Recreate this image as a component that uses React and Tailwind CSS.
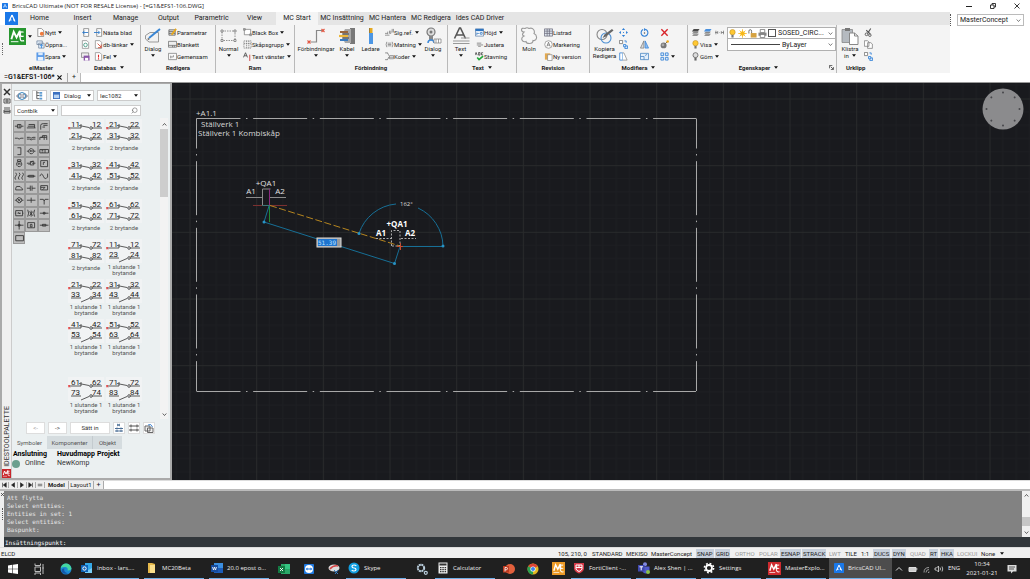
import { Search } from "lucide-react";

const small = {
  newFile: (
    <>
      <path d="M2 .5h4l2.500 2.500v6.500h-6.500z" fill="#fff" stroke="#777" strokeWidth=".8" />
      <circle cx="6.500" cy="6.500" r="2.200" fill="#f07a3c" />
    </>
  ),
  open: (
    <>
      <path d="M1 1h6v4H1zM3 3.500h6V9H3z" fill="#e8f1fb" stroke="#6a7f99" strokeWidth=".8" />
      <path d="M6 9V5M4.500 6.500 6 5l1.500 1.500" fill="none" stroke="#2f86e0" strokeWidth="1" />
    </>
  ),
  save: (
    <>
      <rect x=".5" y=".5" width="9" height="9" fill="#5b9ae8" />
      <rect x="2.500" y=".5" width="5" height="3" fill="#dcebfb" />
      <rect x="2" y="5.500" width="6" height="4" fill="#e9f2fc" />
    </>
  ),
  prev: (
    <>
      <path d="M3 .7h5.500v8.600H3z" fill="#fff" stroke="#777" strokeWidth=".8" />
      <path d="M8 5H2M4 3 2 5l2 2" fill="none" stroke="#2d78c8" />
    </>
  ),
  next: (
    <>
      <path d="M3 .7h5.500v8.600H3z" fill="#fff" stroke="#777" strokeWidth=".8" />
      <path d="M0 5h6M4.500 3l2 2-2 2" fill="none" stroke="#2d78c8" />
    </>
  ),
  refresh: (
    <>
      <path d="M1.500 .7h5l2 2v6.600h-7z" fill="#fff" stroke="#888" strokeWidth=".8" />
      <circle cx="5" cy="5.500" r="2" fill="none" stroke="#4a9a86" />
    </>
  ),
  saveDb: (
    <>
      <path d="M.5 1h8v5h-8z" fill="#eee" stroke="#777" strokeWidth=".8" />
      <rect x="3" y="4" width="6.500" height="5.500" fill="#8a55a8" />
      <rect x="4.500" y="6.500" width="3.500" height="3" fill="#fff" />
    </>
  ),
  dbLink: (
    <>
      <path d="M1.500 .7h5l2 2v6.600h-7z" fill="#fff" stroke="#888" strokeWidth=".8" />
      <path d="m4 4 4 4M8 5v3.500H4.500" fill="none" stroke="#d4503c" />
    </>
  ),
  error: (
    <>
      <path d="M1.500 .7h5l2 2v6.600h-7z" fill="#fff" stroke="#888" strokeWidth=".8" />
      <path d="M5 3v3M5 7v1.200" stroke="#e02020" strokeWidth="1.200" />
    </>
  ),
  params: (
    <>
      <path d="M1 2h7v6H1zM1 4h7M1 6h7" fill="#ddd" stroke="#555" strokeWidth=".8" />
      <path d="M4 7.500 9 1" stroke="#e8a91c" strokeWidth="2" />
    </>
  ),
  form: <path d="M.5 1.500h9v6.500h-9zM.5 6h9M5 6v2M7 6v2" fill="#eee" stroke="#666" strokeWidth=".8" />,
  common: <path d="M.5 1.500h9v7h-9zM3 4v3M3 5.500h3M6 3.500v2" fill="#f8f8f8" stroke="#777" strokeWidth=".8" />,
  blackBox: <path d="M1.500 1.500h7v6h-7zM.5 .5h2v2h-2zM7.500 6.500h2v2h-2z" fill="#fff" stroke="#777" strokeWidth=".8" />,
  cabinet: <path d="M1 1h8v8H1zM4 1v8M6.500 1v8M1 4h8" fill="none" stroke="#777" strokeWidth=".8" strokeDasharray="1.500 .8" />,
  textLeft: (
    <>
      <path d="M.5 6 2.800 .8 5 6M1.400 4.200h2.800" fill="none" stroke="#444" strokeWidth=".9" />
      <path d="M7.500 3v7" stroke="#d04040" />
    </>
  ),
  sigRef: <path d="M0 6h3M3 4v3M5 3v3h1.500V3M8 1v4M9.500 1v4M0 8h5" fill="none" stroke="#777" strokeWidth=".8" />,
  feed: <path d="M2 2Q.5 5 2 8M8 2q1.500 3 0 6M3 3.500h4M3 5h4M3 6.500h4" fill="none" stroke="#777" strokeWidth=".8" />,
  codes: <path d="M0 1h3M0 8.500h3M2 1q2 0 2 3M2 8.500q2 0 2-3M5 4h4.500v3.500H5zM5 5.800h4.500" fill="none" stroke="#777" strokeWidth=".8" />,
  height: (
    <>
      <path d="M.5 1h9v8h-9z" fill="#fff" stroke="#5a7ea8" strokeWidth=".8" />
      <path d="M.5 1h9v2.500h-9z" fill="#2f75c0" />
      <path d="M2 5v3M2 6h3M6 5h2v2H6z" fill="none" stroke="#2f75c0" strokeWidth=".8" />
    </>
  ),
  adjust: <path d="M2 3.500h5M2 5.500h7M3.500 7h3" stroke="#888" strokeWidth="1" />,
  spell: (
    <>
      <path d="M0 3.500 1.200 .5 2.400 3.500M4 .5v3h1.500V.5zM9 .8H7.200v2.400H9" fill="none" stroke="#333" strokeWidth=".8" />
      <path d="m2.500 6 2 2.500L9 4.500" fill="none" stroke="#20a838" strokeWidth="1.800" />
    </>
  ),
  list: <path d="M.5 1h9v8h-9zM.5 3.500h9M.5 6h9M3.500 1v8M6 1v8" fill="#dfe6ee" stroke="#667" strokeWidth=".8" />,
  marking: (
    <>
      <circle cx="5" cy="5" r="4.200" fill="#fff" stroke="#888" strokeWidth=".8" />
      <path d="M3.200 7.200 5 2.500l1.800 4.700M3.800 5.700h2.400" fill="none" stroke="#555" strokeWidth=".7" />
    </>
  ),
  version: (
    <>
      <path d="M1 1.500h6v7H1z" fill="#e3a94e" />
      <path d="M4 3h5v6.500H4z" fill="#fff" stroke="#888" strokeWidth=".8" />
    </>
  ),
  move: <path d="M5 0 6.800 2.200H3.200zM5 10 3.200 7.800h3.600zM0 5l2.200-1.800v3.600zM10 5 7.800 6.800V3.200zM4.500 4.500h1v1h-1z" fill="#2f7fd6" />,
  rotate: (
    <>
      <path d="M6.500 1.800A3.800 3.800 0 1 1 3.500 1.800" fill="none" stroke="#2f7fd6" strokeWidth="1.200" />
      <path d="M4.500 0 7 1.700 4.500 3.500z" fill="#2f7fd6" />
      <circle cx="5" cy="5.500" r=".8" fill="#555" />
    </>
  ),
  remove: <path d="m1.500 1.500 7 7M8.500 1.500l-7 7" stroke="#d8232a" strokeWidth="1.500" />,
  copy: (
    <>
      <path d="M.5 .5H4V4H.5z" fill="#fff" stroke="#666" strokeWidth=".8" />
      <path d="M6 1h2v2M5 5h2.500v2.500H5zM7.500 6.500h2v3h-3v-2" fill="#d7e7f9" stroke="#2f7fd6" strokeWidth=".9" />
    </>
  ),
  mirror: (
    <>
      <path d="M4.300 1v8H.5z" fill="#ddd" stroke="#777" strokeWidth=".8" />
      <path d="M5.700 1v8h3.800z" fill="#8fbdf0" stroke="#2f7fd6" strokeWidth=".8" />
    </>
  ),
  erase: (
    <>
      <circle cx="4" cy="6" r="3.300" fill="#777" />
      <circle cx="3.300" cy="5.500" r="1.500" fill="#aaa" />
      <path d="M6 4 8 2" stroke="#555" />
      <circle cx="8.500" cy="1.700" r="1.400" fill="#f0a818" />
    </>
  ),
  trim: (
    <>
      <path d="M.8 1H4v8H.8z" fill="#fff" stroke="#2f7fd6" strokeWidth=".9" />
      <path d="M4 1h1.500L9 9H4" fill="#fff" stroke="#888" strokeWidth=".8" />
    </>
  ),
  scale: <path d="M.5 1.500h9v7h-9zM.5 5h4v3.500M5.500 4 8 2.500" fill="#e3effb" stroke="#4d88c4" strokeWidth=".9" />,
  array: <path d="M1 1h3v3H1zM6 1h3v3H6zM1 6h3v3H1zM6 6h3v3H6z" fill="#dbe9f9" stroke="#2f7fd6" strokeWidth=".9" />,
  layers: (
    <>
      <path d="M3 6.500h6L7 9H1zM3 4h6L7 6.500H1z" fill="#888" stroke="#fff" strokeWidth=".3" />
      <path d="M3 1.200h6.500L7.500 4H1z" fill="#4a4a4a" />
    </>
  ),
  layersBlue: (
    <>
      <path d="M3 6.500h6L7 9H1zM3 4h6L7 6.500H1z" fill="#888" stroke="#fff" strokeWidth=".3" />
      <path d="M3 1.200h6.500L7.500 4H1z" fill="#4a90dd" />
    </>
  ),
  isolate: <path d="M1 3v4M0 5h3M3 3.500v3M5 5h.5M7 3.500v3M7 5h3M9.500 3v4" stroke="#777" strokeWidth=".9" />,
  bulb: (
    <>
      <circle cx="5" cy="3.500" r="3" fill="#ffc832" stroke="#b88a20" strokeWidth=".6" />
      <path d="M3.800 6.500h2.400V9.500H3.800z" fill="#777" />
    </>
  ),
  bulbOff: (
    <>
      <circle cx="5" cy="3.500" r="2.800" fill="#ddd" stroke="#555" strokeWidth=".8" />
      <path d="M3.800 6.300h2.400V9.500H3.800z" fill="#666" />
    </>
  ),
  sun: (
    <>
      <circle cx="5" cy="5" r="2.600" fill="#ffc41e" />
      <path d="M5 .3v9.400M.3 5h9.400M1.800 1.800l6.400 6.400M8.200 1.800 1.800 8.200" stroke="#f5b51a" strokeWidth=".9" />
    </>
  ),
  lock: (
    <>
      <path d="M1 5V2.500q0-1.800 1.500-1.800T4 2.500V5" fill="none" stroke="#666" />
      <path d="M3 4.500h6.500V9.500H3z" fill="#d5a241" />
    </>
  ),
  print: (
    <>
      <path d="M2.500 .5h5v3.500h-5z" fill="#fff" stroke="#666" strokeWidth=".8" />
      <path d="M.5 4h9v3.500h-9z" fill="#888" />
      <path d="M2.500 6h5v3.500h-5z" fill="#fff" stroke="#666" strokeWidth=".8" />
    </>
  ),
  cut: (
    <>
      <path d="M7.500 .5 4 6M2.500 2.500 7 6.500" stroke="#555" strokeWidth="1.200" />
      <circle cx="2.800" cy="7" r="1.500" fill="none" stroke="#555" />
      <circle cx="6.500" cy="8" r="1.400" fill="none" stroke="#555" />
    </>
  ),
  clipCopy: <path d="M.5 .8h3.500l1.500 1.500V7h-5zM4 3h3.500L9.300 4.500V9.300H4z" fill="#fff" stroke="#777" strokeWidth=".8" />,
};

function Icon({ name, className = "size-[9px]" }) {
  return (
    <svg viewBox="0 0 10 10" className={`${className} shrink-0`} aria-hidden="true">
      {small[name]}
    </svg>
  );
}

function Caret() {
  return (
    <svg viewBox="0 0 4 3" className="h-[3px] w-1 shrink-0" aria-hidden="true">
      <path d="M0 .3h4L2 2.700z" fill="#111" />
    </svg>
  );
}

function Chevron({ className = "" }) {
  return (
    <svg viewBox="0 0 6 6" className={`size-[5px] shrink-0 ${className}`} aria-hidden="true">
      <path d="m.8 1.800 2.200 2.400 2.200-2.400" fill="none" stroke="currentColor" strokeWidth=".9" />
    </svg>
  );
}

function Combo({ label, value, className = "", solid }) {
  return (
    <div className={`relative flex items-center bg-white ${className}`}>
      <select aria-label={label} className="size-full appearance-none bg-transparent pl-[2px] pr-2 outline-none">
        <option>{value}</option>
      </select>
      <span className="pointer-events-none absolute right-[2px] text-[#555]">{solid ? <Caret /> : <Chevron />}</span>
    </div>
  );
}

function BigButton({ icon, label, second, className }) {
  return (
    <button className={`flex shrink-0 flex-col items-center text-[6px] leading-[7px] ${className}`}>
      <svg viewBox="0 0 18 18" className="mt-px size-[18px]" aria-hidden="true">
        {icon}
      </svg>
      <span className="whitespace-nowrap">{label}</span>
      {second ? (
        <span className="flex items-center gap-[3px] whitespace-nowrap">{second}</span>
      ) : (
        <span className="flex h-[7px] items-center">
          <Caret />
        </span>
      )}
    </button>
  );
}

function SmallButton({ icon, label, arrow }) {
  return (
    <button className="flex h-3 items-center text-[6px] whitespace-nowrap" aria-label={label || icon}>
      <Icon name={icon} />
      {label}
      {arrow && (
        <span className="ml-[2px]">
          <Caret />
        </span>
      )}
    </button>
  );
}

function Group({ title, arrow, className, children }) {
  return (
    <section className={`flex shrink-0 flex-col border-[#b9b9b9] pt-px ${className}`}>
      <div className="flex h-9 items-start">{children}</div>
      <h2 className="flex h-[10px] items-center justify-center gap-1 text-[6px] font-bold">
        {title}
        {arrow && <Caret />}
      </h2>
    </section>
  );
}

function McLogo({ className, bg }) {
  return (
    <svg viewBox="0 0 18 18" className={className} aria-hidden="true">
      <path d="M0 0h18v18H0z" fill={bg} />
      <path d="m2.500 12 2.500-8 3 6 3.500-7v7" fill="none" stroke="#fff" strokeWidth="2" />
      <path d="M15.500 4.500q-3.500-1.500-3.500 2t3.500 2M12 10q-1 4.500 4 3.500" fill="none" stroke="#fff" strokeWidth="1.400" />
      <path d="M2 14.500h8" stroke="#fff" strokeWidth="1" />
    </svg>
  );
}

function BricsLogo({ className }) {
  return (
    <svg viewBox="0 0 12 12" className={className} aria-hidden="true">
      <rect width="12" height="12" rx="1" fill="#1a78e8" />
      <path d="M6 2.500 3 9M6 2.500 9 9M3.500 7.500h2M7 7.500h2" fill="none" stroke="#fff" strokeWidth="1.200" />
    </svg>
  );
}

const ribbonTabs = [
  ["Home", "w-[43px]"],
  ["Insert", "w-[43px]"],
  ["Manage", "w-[43px]"],
  ["Output", "w-[43px]"],
  ["Parametric", "w-[43px]"],
  ["View", "w-[43px]"],
  ["MC Start", "w-[42px] bg-[#f4f4f4]"],
  ["MC Insättning", "w-[48px]"],
  ["MC Hantera", "w-[43px]"],
  ["MC Redigera", "w-[44px]"],
  ["Ides CAD Driver", "w-[54px]"],
];

const bigIcons = {
  tag: (
    <>
      <path d="M1.500 8.500 6 5.500h8.500v9.500H5l-3.500-3z" fill="#f2f2f2" stroke="#999" />
      <path d="m5 11 11-9" stroke="#3a86d4" strokeWidth="2" />
      <circle cx="4.500" cy="12" r="1" fill="#777" />
    </>
  ),
  frame: (
    <>
      <path d="M2 4h13v9.500H2z" fill="none" stroke="#888" strokeWidth=".9" strokeDasharray="1.500 1" />
      <path d="M1 3h2v2H1zM14 3h2v2h-2zM1 12.500h2v2H1zM14 12.500h2v2h-2z" fill="#fff" stroke="#666" strokeWidth=".7" />
    </>
  ),
  connection: (
    <>
      <path d="M3.500 15h6V3.500h6" fill="none" stroke="#888" strokeWidth="1.200" />
      <path d="m.5 13.500 3 3M3.500 13.500l-3 3M14.500 2l3 3M17.500 2l-3 3" stroke="#e25540" strokeWidth="1.100" />
    </>
  ),
  cable: (
    <>
      <path d="M12 1h5v16h-5z" fill="#787878" />
      <path d="M7 2h6v14H7l-2-4V6z" fill="#a8a8a8" />
      <path d="M2 5h8" stroke="#9a653a" strokeWidth="2" />
      <path d="M1 9h9" stroke="#edb83a" strokeWidth="2.200" />
      <path d="M2 13h8" stroke="#3a7bc0" strokeWidth="2" />
      <path d="M4 7h7M4 11h7" stroke="#444" />
    </>
  ),
  wire: (
    <>
      <path d="M7.500 1h3v5h-3z" fill="#e5a922" />
      <path d="M7 6h4v11H7z" fill="#4c96e4" />
      <path d="M7.500 1v5" stroke="#916b1a" strokeWidth=".8" />
    </>
  ),
  plug: (
    <>
      <circle cx="7" cy="5" r="4" fill="#ddd" stroke="#777" strokeWidth="1.200" />
      <circle cx="7" cy="5" r="1.500" fill="#777" />
      <path d="M5 9h4v4H5z" fill="#888" />
      <path d="M4 16q0-3 3-3t3 3" fill="none" stroke="#3d8ada" strokeWidth="1.500" />
      <path d="M10 12h7v4h-7zM12 12v4M14.500 12v4" fill="#fff" stroke="#888" strokeWidth=".8" />
    </>
  ),
  text: (
    <>
      <path d="M2.500 11.500 7.500 1h1l5 10.500M4.500 8h7" fill="none" stroke="#555" strokeWidth="1.600" />
      <path d="M9 11h8.500M1 14h16.500M1 16.500h16.500" stroke="#999" />
    </>
  ),
  cloud: (
    <path
      d="M4 5Q1.500 5 1.500 2.800T5 1.500Q7 0 9 1.500q3-1 4.500 1T14 6.500q3 1.500 2.500 4.500t-3.500 2.500q0 3-3.500 3T6 14.500Q3 15.500 2 13t2-4Q1 8 4 5Z"
      fill="#f7f7f7"
      stroke="#999"
      strokeWidth="1.100"
    />
  ),
  edit: (
    <>
      <circle cx="6" cy="7.500" r="5" fill="none" stroke="#888" strokeWidth="1.100" />
      <circle cx="10" cy="11" r="5" fill="none" stroke="#4c8fd2" strokeWidth="1.100" />
      <path d="m6.500 11 2-3.500L16 2l1.500 1.500L10 9.500z" fill="#666" />
    </>
  ),
  paste: (
    <>
      <path d="M1 2.500h10.500v13H1z" fill="#b5bac0" stroke="#888" strokeWidth=".8" />
      <path d="M4 1h5v3H4z" fill="#777" />
      <path d="M8.500 6h5L17 9v8.500H8.500z" fill="#fff" stroke="#888" />
      <path d="M13.500 6v3H17" fill="none" stroke="#888" />
    </>
  ),
};

function Ribbon() {
  return (
    <div className="flex">
      <div className="min-w-0 flex-1">
        <nav className="flex h-[13px] bg-[#e5e5e5] text-[7px]">
          <span className="w-[5px] shrink-0 bg-white" />
          <button aria-label="Application menu" className="flex w-[13px] shrink-0 justify-center bg-[#1a78e8]">
            <BricsLogo className="h-[13px] w-3" />
          </button>
          {ribbonTabs.map(([name, cls]) => (
            <button key={name} className={`shrink-0 text-center whitespace-nowrap ${cls}`}>
              {name}
            </button>
          ))}
        </nav>

        <div className="flex h-12 overflow-hidden bg-[#f4f4f4]">
          <div className="flex w-[5px] shrink-0 items-center justify-center">
            <span className="h-3 border-l border-dotted border-[#666]" />
          </div>
          <Group title="elMaster" className="w-[73px] border-r">
            <button className="ml-1 mt-[2px] flex items-center gap-[2px]" aria-label="elMaster">
              <McLogo bg="#27962f" className="size-[17px]" />
              <Caret />
            </button>
            <div className="ml-1">
              <SmallButton icon="newFile" label="Nytt" arrow />
              <SmallButton icon="open" label="Öppna..." />
              <SmallButton icon="save" label="Spara" arrow />
            </div>
          </Group>
          <Group title="Databas" arrow className="w-[63px] border-r">
            <div className="ml-[3px] w-[13px]">
              <SmallButton icon="prev" />
              <SmallButton icon="refresh" />
              <SmallButton icon="saveDb" />
            </div>
            <div>
              <SmallButton icon="next" label="Nästa blad" />
              <SmallButton icon="dbLink" label="db-länkar" arrow />
              <SmallButton icon="error" label="Fel" arrow />
            </div>
          </Group>
          <Group title="Redigera" className="w-[75px] border-r">
            <BigButton icon={bigIcons.tag} label="Dialog" className="w-6" />
            <div className="ml-[3px]">
              <SmallButton icon="params" label="Parametrar" />
              <SmallButton icon="form" label="Blankett" />
              <SmallButton icon="common" label="Gemensam" />
            </div>
          </Group>
          <Group title="Ram" className="w-[79px] border-r">
            <BigButton icon={bigIcons.frame} label="Normal" className="w-[25px]" />
            <div className="ml-[2px]">
              <SmallButton icon="blackBox" label="Black Box" arrow />
              <SmallButton icon="cabinet" label="Skåpsgrupp" arrow />
              <SmallButton icon="textLeft" label="Text vänster" arrow />
            </div>
          </Group>
          <Group title="Förbindning" className="w-[153px] border-r">
            <BigButton icon={bigIcons.connection} label="Förbindningar" className="w-[42px]" />
            <BigButton icon={bigIcons.cable} label="Kabel" className="w-5" />
            <BigButton icon={bigIcons.wire} label="Ledare" second=" " className="w-[27px]" />
            <div className="ml-px w-[38px]">
              <SmallButton icon="sigRef" label="Sig.ref." arrow />
              <SmallButton icon="feed" label="Matning" arrow />
              <SmallButton icon="codes" label="Koder" arrow />
            </div>
            <BigButton icon={bigIcons.plug} label="Dialog" className="w-5" />
          </Group>
          <Group title="Text" arrow className="w-[69px] border-r">
            <BigButton icon={bigIcons.text} label="Text" className="w-[25px]" />
            <div className="ml-[2px]">
              <SmallButton icon="height" label="Höjd" arrow />
              <SmallButton icon="adjust" label="Justera" />
              <SmallButton icon="spell" label="Stavning" />
            </div>
          </Group>
          <Group title="Revision" className="w-[73px] border-r">
            <BigButton icon={bigIcons.cloud} label="Moln" second=" " className="w-6" />
            <div className="ml-[3px]">
              <SmallButton icon="list" label="Listrad" />
              <SmallButton icon="marking" label="Markering" />
              <SmallButton icon="version" label="Ny version" />
            </div>
          </Group>
          <Group title="Modifiera" arrow className="w-[98px] border-r">
            <BigButton icon={bigIcons.edit} label="Kopiera" second="Redigera" className="w-[29px]" />
            <div className="grid grid-cols-[21px_20px_20px]">
              <SmallButton icon="move" />
              <SmallButton icon="rotate" />
              <SmallButton icon="remove" />
              <SmallButton icon="copy" />
              <SmallButton icon="mirror" />
              <SmallButton icon="erase" />
              <SmallButton icon="trim" />
              <SmallButton icon="scale" />
              <SmallButton icon="array" arrow />
            </div>
          </Group>
          <section className="flex w-[149px] shrink-0 flex-col border-r border-[#b9b9b9] pt-px">
            <div className="flex h-9">
              <div className="ml-[3px] w-9 shrink-0">
                <div className="flex gap-[3px]">
                  <SmallButton icon="layers" />
                  <SmallButton icon="layersBlue" />
                  <SmallButton icon="isolate" />
                </div>
                <SmallButton icon="bulb" label="Visa" arrow />
                <SmallButton icon="bulbOff" label="Göm" arrow />
              </div>
              <div className="mt-px h-[24px] min-w-0 flex-1 divide-y divide-[#b0b0b0] border border-[#b0b0b0] bg-white text-[7px]">
                <div className="flex h-[11px] items-center">
                  <Icon name="bulb" />
                  <Icon name="sun" className="ml-px size-[9px]" />
                  <Icon name="lock" className="ml-px size-[9px]" />
                  <Icon name="print" className="ml-px size-[9px]" />
                  <span className="ml-px size-2 shrink-0 border border-[#555]" />
                  <Combo label="Layer" value="SOSED_CIRC..." className="h-full min-w-0 flex-1" />
                </div>
                <div className="flex h-[11px] items-center">
                  <span className="ml-[3px] w-[49px] border-t border-[#444]" />
                  <Combo label="Linetype" value="ByLayer" className="h-[9px] min-w-0 flex-1" />
                </div>
              </div>
            </div>
            <div className="flex h-[10px] items-center text-[6px]">
              <h2 className="flex flex-1 items-center justify-center gap-1 font-bold">
                Egenskaper <Caret />
              </h2>
              <svg viewBox="0 0 6 6" className="mr-[2px] size-[5px]" aria-hidden="true">
                <path d="M.5 4V.5H4M2 2l3 3M5.300 2.500v3h-3" fill="none" stroke="#444" />
              </svg>
            </div>
          </section>
          <section className="w-[54px] shrink-0 pt-px">
            <div className="flex h-9 gap-[3px] pl-[2px]">
              <BigButton
                icon={bigIcons.paste}
                label="Klistra"
                second={
                  <>
                    in <Caret />
                  </>
                }
                className="w-[22px]"
              />
              <div>
                <SmallButton icon="cut" />
                <SmallButton icon="clipCopy" />
                <SmallButton icon="copy" />
              </div>
            </div>
            <h2 className="flex h-[10px] items-center pl-[9px] text-[6px] font-bold">Urklipp</h2>
          </section>
        </div>
      </div>

      <div className="flex w-20 shrink-0 items-start bg-white pt-[2px] text-[7px]">
        <span className="h-3 w-[7px] border-l border-dotted border-[#555]" />
        <Combo label="Workspace" value="MasterConcept" className="h-3 w-[67px] border border-[#bbb]" />
      </div>
    </div>
  );
}

const tools = [
  "M1 6h3M8 6h3M4 4h4v4H4zM6 4v4",
  "M1 8h10M2 6h8M3 4h7v4",
  "M2 10V5q0-2 3-2h5M5 5h5M4 7h3",
  "M1 6h3q2 2 4 0h3",
  "M1 5h3q2 2 4 0h3M1 7h3q2 2 4 0h3",
  "M1 8V5h3V3h5v5M2 5h7M6 3v5",
  "M4 2h4v8H4",
  "M1 6h2M9 6h2M6 3a3 3 0 1 0 .1 0M5 7V5l1 1 1-1v2",
  "M1 4h10v4H1zM3 5h2M3 7h2M7 4v4",
  "M6 4a3 3 0 1 0 .1 0M4 2h4v2H4zM5 8V6h2v2",
  "M1 6h3M7 6h4M3 8l5-5M5 4h4v4H5z",
  "M2 3h8v7H2zM5 8V5h2",
  "M2 2q2 2 0 4t0 4M6 2q2 2 0 4t0 4M10 2q2 2 0 4t0 4",
  "M1 6h10M3 5h6v2H3z",
  "M1 6q2-5 4 0t5 1V3",
  "M2 8h8V7L7 4H3L2 6z",
  "M1 6h4M5 3v6M7 3v6M7 6h4",
  "M2 3h8v5H2zM2 5h5M4 8l3-3",
  "M6 3a3 3 0 1 0 .1 0M4 4l4 4M8 4 4 8M1 6h2M9 6h2",
  "M1 6h10M6 3v6",
  "M1 5h4l1 2 1-2h4M6 7v4",
  "M2 3h8v6H2zM4 6h4M5 5l2 2M1 6h1M10 6h1",
  "M2 2q2 4 0 8M10 2q-2 4 0 8M4 4l4 5M8 4 4 9M6 3v7",
  "M1 6h10M5 5h2v2H5z",
  "M6 1v10M1 6h10M5 5h2v2H5z",
  "M2 3h8v6H2zM5 5h2v3H5z",
  "M1 6h10M4 5h4v2H4z",
  "M2 3h9v6H2z",
];

// [top pair, bottom pair, closing contact in the lower half]
const symbols = [
  [["11", "12"], ["21", "22"], false],
  [["21", "22"], ["31", "32"], false],
  [["31", "32"], ["41", "42"], false],
  [["41", "42"], ["51", "52"], false],
  [["51", "52"], ["61", "62"], false],
  [["61", "62"], ["71", "72"], false],
  [["71", "72"], ["81", "82"], false],
  [["11", "12"], ["23", "24"], true],
  [["21", "22"], ["33", "34"], true],
  [["31", "32"], ["43", "44"], true],
  [["41", "42"], ["53", "54"], true],
  [["51", "52"], ["63", "64"], true],
  [["61", "62"], ["73", "74"], true],
  [["71", "72"], ["83", "84"], true],
];

function Contact({ y, pair, open }) {
  return (
    <g fill="none" stroke="#333" strokeWidth=".8">
      <path d={open ? `M3 ${y}h10M24 ${y}h10M13 ${y + 4}l8-3.500` : `M1 ${y}h12v-4M24 ${y}h10M11 ${y - 2.500}l10 2`} />
      <circle cx="23" cy={y} r="1.300" />
      <g fill="#222" stroke="none" fontSize="8">
        <text x="3" y={y - 1}>{pair[0]}</text>
        <text x="24" y={y - 1}>{pair[1]}</text>
      </g>
    </g>
  );
}

function SymbolCell({ top, bottom, open }) {
  return (
    <button className="flex h-10 flex-col items-center text-[6px] leading-[6px] whitespace-nowrap text-[#555]">
      <svg viewBox="0 0 36 24" className="h-6 w-9 shrink-0" aria-hidden="true">
        <rect width="36" height="24" fill="#f1f3f4" />
        <Contact y={9} pair={top} />
        <Contact y={open ? 19 : 20} pair={bottom} open={open} />
        <path d="m0 8 2 2.500M2 8l-2 2.500" stroke="#e33" strokeWidth=".8" />
      </svg>
      {open ? (
        <span className="mt-px">
          1 slutande 1<br />
          brytande
        </span>
      ) : (
        <span className="mt-[2px]">2 brytande</span>
      )}
    </button>
  );
}

function Palette() {
  return (
    <aside className="flex w-[172px] shrink-0 border-x-2 border-t border-b-2 border-[#aaa] bg-[#ebf0f1] text-[#333]">
      <div className="flex w-[10px] shrink-0 flex-col items-center border-r border-[#ccc] bg-[#f0f0f0] pt-1">
        <svg viewBox="0 0 8 26" className="h-[26px] w-2" aria-hidden="true">
          <path d="m1 1 6 6M7 1 1 7" stroke="#333" strokeWidth="1.500" />
          <path d="M1 11h6v4H1zM4 11v4M2 13h4M1 20h6M1 22h6v3H1zM1 23.500h6" fill="none" stroke="#555" />
        </svg>
        <span className="mt-auto rotate-180 text-[7px] leading-[8px] whitespace-nowrap [writing-mode:vertical-rl]">
          IDESTOOLPALETTE
        </span>
        <McLogo bg="#c8262c" className="mt-[2px] size-[9px]" />
      </div>

      <div className="flex min-w-0 flex-1 flex-col text-[6px]">
        <div className="box-content flex h-[11px] gap-[3px] pl-[2px] pt-[6px]">
          <button aria-label="Symbol" className="flex h-[11px] w-[15px] items-center justify-center border border-[#ccc] bg-white">
            <svg viewBox="0 0 12 10" className="h-[10px] w-3" aria-hidden="true">
              <path d="M0 5h2M10 5h2M2 3h3v4H2zM7 3h3v4H7z" fill="none" stroke="#667" strokeWidth=".8" />
              <circle cx="6" cy="5" r="3.500" fill="none" stroke="#3b8ac4" />
            </svg>
          </button>
          <button aria-label="Tree" className="flex h-[11px] w-[15px] items-center justify-center border border-[#ccc] bg-white">
            <svg viewBox="0 0 10 10" className="size-[9px]" aria-hidden="true">
              <path d="M2 0v8.500h3M2 2h3M2 5h3" fill="none" stroke="#555" />
              <path d="M5 1h3v2H5zM5 4h3v2H5zM5 7.500h3v2H5z" fill="#5b9ad0" />
            </svg>
          </button>
          <div className="flex w-11 items-center border border-[#ccc] bg-white">
            <svg viewBox="0 0 8 8" className="mx-[2px] size-[7px] shrink-0" aria-hidden="true">
              <rect width="8" height="8" fill="#3b6fc0" />
              <path d="M1 3h6v4H1z" fill="#b9d3f2" />
            </svg>
            <Combo label="View" value="Dialog" solid className="h-[9px] w-[31px]" />
          </div>
          <Combo label="Standard" value="Iec1082" solid className="h-[11px] w-11 border border-[#ccc]" />
        </div>
        <div className="mt-1 flex h-[11px] gap-[3px] pl-[2px]">
          <Combo label="Library" value="Contblk" solid className="w-11 border border-[#ccc]" />
          <label className="flex w-20 items-center border border-[#ccc] bg-white pr-[2px]">
            <input aria-label="Search symbols" className="w-0 flex-1 outline-none" />
            <Search className="size-[7px] -scale-x-100 text-[#666]" />
          </label>
        </div>

        <div className="mt-[2px] flex min-h-0 flex-1">
          <div className="ml-px mt-[2px] grid h-[124px] w-[37px] shrink-0 grid-cols-3 grid-rows-10 content-start">
            {tools.map((d, idx) => (
              <button key={idx} aria-label={`Tool ${idx + 1}`} className="border border-[#999] bg-[#bdbdbd]">
                <svg viewBox="0 0 12 12" className="size-full" aria-hidden="true">
                  <path d={d} fill="none" stroke="#333" strokeWidth="1" />
                </svg>
              </button>
            ))}
          </div>
          <div className="ml-[18px] grid flex-1 grid-cols-[36px_36px] content-start gap-x-[2px] pt-px">
            {symbols.map(([top, bottom, open], idx) => (
              <div key={idx} className={idx > 11 ? "mt-[18px]" : ""}>
                <SymbolCell top={top} bottom={bottom} open={open} />
              </div>
            ))}
          </div>
          <div className="mr-[2px] flex w-2 flex-col items-center bg-[#f3f3f3] py-[2px] text-[#333]">
            <Chevron className="mt-[2px] rotate-180" />
            <span className="mt-[2px] h-[68px] w-full bg-[#cdcdcd]" />
            <Chevron className="mt-auto" />
          </div>
        </div>

        <div className="flex h-[17px] items-center gap-[3px] pl-[14px]">
          <button className="h-3 w-[19px] border border-[#ddd] bg-white text-[#999]">&lt;-</button>
          <button className="h-3 w-[19px] border border-[#ddd] bg-white">-&gt;</button>
          <button className="h-3 w-10 border border-[#ddd] bg-white">Sätt in</button>
          <button aria-label="Insert grid" className="flex size-3 items-center justify-center border border-[#ddd] bg-white">
            <svg viewBox="0 0 10 10" className="size-[10px]">
              <path d="M3 1l3 2M6 1 3 3M1 5.500h8M1 8h8M3 4.500v2M7 4.500v2M3 7v2M7 7v2" fill="none" stroke="#4a6f96" />
            </svg>
          </button>
          <button aria-label="Insert rows" className="flex size-3 items-center justify-center border border-[#ddd] bg-white">
            <svg viewBox="0 0 10 10" className="size-[10px]">
              <path d="M0 3h10M0 7h10M2 1.500v3M8 1.500v3M2 5.500v3M8 5.500v3" fill="none" stroke="#555" />
            </svg>
          </button>
          <button aria-label="Insert copy" className="flex size-3 items-center justify-center border border-[#ddd] bg-white">
            <svg viewBox="0 0 10 10" className="size-[10px]">
              <path d="M1 3h5v5H1zM3.500 5H9v4.500H3.500z" fill="#eee" stroke="#666" />
              <path d="M4 2q3-2 4.500 2" fill="none" stroke="#3b82d0" />
            </svg>
          </button>
        </div>
        <div className="flex h-[13px] items-stretch text-[6px] text-[#555]">
          <button className="w-[35px]">Symboler</button>
          <button className="w-[46px] border-r border-[#c4cbcf] bg-[#d5dcdf]">Komponenter</button>
          <button className="w-[29px] bg-[#d5dcdf]">Objekt</button>
        </div>
        <table className="mb-[10px] mt-px w-[122px] table-fixed text-left text-[7px] leading-[9px]">
          <thead>
            <tr>
              <th className="w-[45px] pl-px font-bold text-black">Anslutning</th>
              <th className="w-10 font-bold text-black">Huvudmapp</th>
              <th className="font-bold text-black">Projekt</th>
            </tr>
          </thead>
          <tbody>
            <tr>
              <td>
                <span className="flex items-center gap-[5px]">
                  <span className="size-2 rounded-full bg-[#6b9f8e]" />
                  Online
                </span>
              </td>
              <td>NewKomp</td>
              <td />
            </tr>
          </tbody>
        </table>
      </div>
    </aside>
  );
}

const GRID = 200 / 3;
const STEP = GRID / 5;

function Canvas() {
  return (
    <div className="relative min-w-0 flex-1 bg-[#191a1e]">
      <svg className="absolute inset-0 size-full [font-family:'Open_Sans',sans-serif]" role="img" aria-label="Drawing">
        <defs>
          <pattern id="grid" width={GRID} height={GRID} x="17.500" y="15.500" patternUnits="userSpaceOnUse">
            {[1, 2, 3, 4].map((n) => (
              <path key={n} d={`M${n * STEP} 0v67M0 ${n * STEP}h67`} stroke="#1d1e22" />
            ))}
            <path d="M.5 0v67M0 .5h67" stroke="#282a2b" />
          </pattern>
        </defs>
        <rect width="100%" height="100%" fill="url(#grid)" />

        <g transform="translate(-172 -83)" fill="none">
          <g stroke="#a8a8a8" strokeWidth="1">
            <path d="M196.500 118.500H696M196.500 391.500H696" strokeDasharray="54 5.500 1.500 5.660" strokeDashoffset="10" />
            <path d="M196.500 118.500V391M696.500 118.500V391" strokeDasharray="54 5.500 1.500 5.660" strokeDashoffset="24" />
          </g>
          <g fill="#d8d8d8" fontSize="8">
            <text x="196" y="116">+A1.1</text>
            <text x="201" y="127">Ställverk 1</text>
            <text x="198" y="136">Ställverk 1 Kombiskåp</text>
          </g>

          <path d="M246 197.500h16.500M270 197.500h16M262.500 205v-16h8" stroke="#8b8b8b" />
          <path d="M269.500 189v16" stroke="#8c2a80" />
          <path d="M253 205.500h34" stroke="#7c3030" />
          <path d="M262 205.500h8" stroke="#3e7573" />
          <path d="M269.500 206v16" stroke="#218a33" />
          <g fill="#e0e0e0" fontSize="8" textAnchor="middle">
            <text x="266" y="186">+QA1</text>
            <text x="251" y="194">A1</text>
            <text x="280" y="194">A2</text>
          </g>

          <path d="M270 205.500 400 246" stroke="#b5851f" strokeDasharray="7 2.500" />
          <path d="M269 206 264 222 394.500 263.500 400 246.500H443" stroke="#176f96" />
          <path d="M359 233.500A43 43 0 0 1 396 204M418 208A43 43 0 0 1 443 246" stroke="#176f96" />
          <g fill="#2893c4">
            <circle cx="264" cy="222" r="1.500" />
            <circle cx="394.500" cy="263.500" r="1.500" />
            <circle cx="359" cy="233.500" r="1.500" />
            <circle cx="443" cy="246" r="1.500" />
          </g>

          <path d="M391.500 246v-15.500h8.500V246zM376 238.500h15M401 238.500h15" stroke="#aaa" strokeDasharray="2 1.500" />
          <path d="M397 246.500h6M400.500 243v7" stroke="#c44c32" />
          <g fill="#fff" fontSize="8" fontWeight="bold" textAnchor="middle">
            <text x="397" y="227">+QA1</text>
            <text x="381" y="236">A1</text>
            <text x="410" y="236">A2</text>
          </g>
          <text x="400" y="206" fill="#ddd" fontSize="6">
            162°
          </text>
        </g>

        <g transform="translate(-172 -83)">
          <rect x="317" y="238" width="24" height="9" fill="#999" stroke="#ddd" />
          <rect x="318" y="239" width="19" height="7" fill="#1d74cf" />
          <text x="318" y="245" fill="#bfe0ff" className="text-[6px] [font-family:'DejaVu_Sans_Mono',monospace]">
            51.39
          </text>
        </g>
      </svg>

      <svg viewBox="-21 -21 42 42" className="absolute right-[6px] top-[5px] size-[42px]" aria-hidden="true">
        <circle r="20.500" fill="#8b8b8d" />
        {[0, 45, 90, 135, 180, 225, 270, 315].map((a) => (
          <circle key={a} cx="16.500" r="1" fill="#47474b" transform={`rotate(${a})`} />
        ))}
      </svg>
    </div>
  );
}

const history = ["Att flytta", "Select entities:", "Entities in set: 1", "Select entities:", "Baspunkt:"];

const statusItems = [
  ["105, 210, 0", "w-[34px]"],
  ["STANDARD", "w-[34px]"],
  ["MEKISO", "w-[25px]"],
  ["MasterConcept", "w-[46px]"],
  ["SNAP", "w-[19px]", "on"],
  ["GRID", "w-[19px]", "on"],
  ["ORTHO", "w-[24px]", "off"],
  ["POLAR", "w-[22px]", "off"],
  ["ESNAP", "w-[22px]", "on"],
  ["STRACK", "w-[26px]", "on"],
  ["LWT", "w-[16px]", "off"],
  ["TILE", "w-[16px]"],
  ["1:1", "w-[13px]"],
  ["DUCS", "w-[19px]", "on"],
  ["DYN", "w-[17px]", "on"],
  ["QUAD", "w-[20px]", "off"],
  ["RT", "w-[11px]", "on"],
  ["HKA", "w-[16px]", "on"],
  ["LOCKUI", "w-[24px]", "off"],
  ["None", "w-[16px]"],
];

const statusColors = { on: "bg-[#c7d0dc] text-[#222]", off: "text-[#999]" };

function Bottom() {
  return (
    <>
      <div className="flex h-2 shrink-0 items-center bg-white text-[7px] leading-[8px]">
        <div className="flex h-full items-center border-r border-[#aaa] bg-[#eee]">
          {["M2 1v6M7 1 3 4l4 3z", "M6 1 2 4l4 3z", "M2 1l4 3-4 3z", "M6 1v6M1 1l4 3-4 3z", "M1 3h6M1 5h6"].map((d, idx) => (
            <button key={idx} aria-label={`Sheet ${idx + 1}`} className="border-r border-[#aaa]">
              <svg viewBox="0 0 8 8" className="h-[6px] w-2">
                <path d={d} fill="#222" stroke="#222" strokeWidth=".8" />
              </svg>
            </button>
          ))}
          <button className="w-[23px] text-[6px] font-bold">Model</button>
          <button className="w-[26px] border-x border-[#aaa] text-[6px]">Layout1</button>
          <button aria-label="New layout" className="w-[9px]">+</button>
        </div>
      </div>

      <div className="flex h-12 shrink-0 border-t-2 border-[#bbb] bg-[#828282] text-[#e6e6e6]">
        <div className="flex w-1 flex-col items-center bg-[#eee]">
          <svg viewBox="0 0 4 4" className="mt-[2px] size-[3px]" aria-hidden="true">
            <path d="m0 0 4 4M4 0 0 4" stroke="#333" />
          </svg>
          <span className="mt-3 h-3 border-l border-dotted border-[#555]" />
        </div>
        <div className="flex-1 pl-[3px] pt-[3px] text-[6px] leading-[8px] [font-family:'DejaVu_Sans_Mono',monospace]">
          {history.map((line, idx) => (
            <p key={idx}>{line}</p>
          ))}
        </div>
        <div className="flex w-[8px] flex-col items-center bg-[#f0f0f0] py-[2px] text-[#333]">
          <Chevron className="rotate-180" />
          <span className="mt-auto h-[9px] w-full bg-[#c6c6c6]" />
          <Chevron className="mt-1" />
        </div>
      </div>
      <label className="flex h-[10px] shrink-0 items-center border-l-4 border-[#eee] bg-[#32373b] pl-px text-[6px] text-white [font-family:'DejaVu_Sans_Mono',monospace]">
        Insättningspunkt:
        <input className="min-w-0 flex-1 bg-transparent outline-none" />
      </label>

      <footer className="flex h-[11px] shrink-0 items-center border-t border-[#ddd] bg-[#f0f0f0] pr-[26px] text-[6px]">
        <span className="pl-px">ELCD</span>
        <span className="ml-auto" />
        {statusItems.map(([name, width, state]) => (
          <button key={name} className={`flex shrink-0 ${width}`}>
            <span className={`px-px whitespace-nowrap ${statusColors[state] || ""}`}>{name}</span>
          </button>
        ))}
        <span className="ml-1">
          <Caret />
        </span>
      </footer>
    </>
  );
}

const taskIcons = {
  windows: <path d="M1 2.500l4.300-.7v3.900H1zM5.900 1.700 11 1v4.700H5.900zM1 6.300h4.300v3.900L1 9.500zM5.900 6.300H11V11l-5.100-.7z" fill="#fff" />,
  taskView: <path d="M2 4h5.500v4.500H2zM2 .5V2.500h5.500V.5M2 12v-2h5.500v2M10 1v10M9.300 5h1.500" fill="none" stroke="#bbb" />,
  edge: (
    <>
      <circle cx="6" cy="6" r="5.500" fill="#1b8ad3" />
      <path d="M.8 5Q2 .5 6 .5t5.500 5Q11 8 7.500 7.500q1-3-2-3.500Q3 3.500.8 5Z" fill="#45d6a0" />
      <path d="M4.500 5.500Q3 9 8 10.300q-6 2-6.500-3Q2 5 4.500 5.500Z" fill="#1357a8" />
    </>
  ),
  outlook: (
    <>
      <path d="M4 1h7v9H4z" fill="#35a9e8" />
      <path d="M4 6l3.500 2L11 6v5H4z" fill="#79cdf6" />
      <path d="M0 3h7v7H0z" fill="#0f64b8" />
      <circle cx="3.500" cy="6.500" r="1.700" fill="none" stroke="#fff" />
    </>
  ),
  folder: (
    <>
      <path d="M2 1h4l3 1v9H2z" fill="#e6b94b" />
      <path d="M4 3h5v8H4z" fill="#fbdf8c" />
    </>
  ),
  word: (
    <>
      <path d="M3 1h9v10H3z" fill="#3b8fe0" />
      <path d="M3 6h9v5H3z" fill="#1c5cb8" />
      <path d="M0 3h7v7H0z" fill="#164c9e" />
      <path d="m1.500 5 1 3 1-3 1 3 1-3" fill="none" stroke="#fff" strokeWidth=".8" />
    </>
  ),
  excel: (
    <>
      <path d="M3 1h9v10H3z" fill="#2aa868" />
      <path d="M7 1h5v5H7z" fill="#34c481" />
      <path d="M0 3h7v7H0z" fill="#137a43" />
      <path d="m2 5 3 3M5 5 2 8" stroke="#fff" strokeWidth=".9" />
    </>
  ),
  teamviewer: (
    <>
      <rect x="1" y="1" width="10" height="10" rx="1" fill="#1f79e0" />
      <circle cx="6" cy="6" r="4" fill="#fff" />
      <path d="m2.500 6 2-1.500v1h3v-1l2 1.500-2 1.500v-1h-3v1z" fill="#1f79e0" />
    </>
  ),
  snip: (
    <>
      <ellipse cx="6" cy="5" rx="5.500" ry="3.500" fill="#ddd" />
      <path d="M2 6q3-4 8-3" fill="none" stroke="#d64545" strokeWidth="1.500" />
      <path d="M6 7l4 4M10 7l-3 4" stroke="#3b82c8" />
    </>
  ),
  skype: (
    <>
      <circle cx="6" cy="6" r="5.500" fill="#109ee0" />
      <path d="M8.300 4Q7.500 3 6 3 4 3 4 4.500T6 6t2 1.500T6 9Q4.500 9 3.700 8" fill="none" stroke="#fff" strokeWidth="1.200" />
    </>
  ),
  gears: (
    <>
      <circle cx="5" cy="5" r="3.200" fill="none" stroke="#bcd0df" strokeWidth="2" strokeDasharray="2 .5" />
      <circle cx="9.800" cy="9.800" r="1.500" fill="none" stroke="#bcd0df" strokeWidth="1.200" />
    </>
  ),
  calculator: (
    <>
      <path d="M1.500 .5h9v11h-9z" fill="#eee" />
      <path d="M2.500 1.500h7v2h-7zM3 5h1.500v1.200H3zM5.300 5h1.500v1.200H5.300zM7.600 5h1.500v1.200H7.600zM3 7h1.500v1.200H3zM5.300 7h1.500v1.200H5.300zM7.600 7h1.500v1.200H7.600zM3 9h1.500v1.200H3zM5.300 9h1.500v1.200H5.300zM7.600 9h1.500v1.200H7.600z" fill="#333" />
    </>
  ),
  powerpoint: (
    <>
      <circle cx="7" cy="6" r="5" fill="#e2603c" />
      <path d="M0 3h6v6.500H0z" fill="#bc3a20" />
      <path d="M2 8.500V4.500h1.300q1.200 0 1.200 1.100T3.300 6.800H2" fill="none" stroke="#fff" strokeWidth=".8" />
    </>
  ),
  chrome: (
    <>
      <circle cx="6" cy="6" r="5.500" fill="#e3b923" />
      <path d="M6 6 1.200 3.300A5.500 5.500 0 0 1 10.800 3.300z" fill="#dd4335" />
      <path d="M6 6 1.200 3.300A5.500 5.500 0 0 0 6 11.500z" fill="#28a152" />
      <circle cx="6" cy="6" r="2.600" fill="#fff" />
      <circle cx="6" cy="6" r="2" fill="#3f82ec" />
    </>
  ),
  shield: (
    <>
      <path d="M1 1h10v6q-1 3-5 4.500Q2 10 1 7z" fill="#d63a48" />
      <path d="M3 3h6v4q-.5 1.500-3 2.500Q3.500 8.500 3 7zM3 5.500h6M6 3v2.500" fill="none" stroke="#fff" strokeWidth="1" />
    </>
  ),
  teams: (
    <>
      <circle cx="7" cy="2.200" r="2" fill="#7f86e0" />
      <path d="M4 4.500h7.500v4q-1 3-4 3-3.500-1-3.500-4z" fill="#5059c9" />
      <path d="M0 3h6.500v6.500H0z" fill="#3f48ae" />
      <path d="M1.500 4.800h3.500M3.200 4.800v3.500" stroke="#fff" />
      <circle cx="10" cy="10" r="2" fill="#8bc34a" />
    </>
  ),
  settings: (
    <>
      <circle cx="6" cy="6" r="3" fill="none" stroke="#fff" strokeWidth="1.800" />
      <circle cx="6" cy="6" r="4.600" fill="none" stroke="#fff" strokeWidth="1.600" strokeDasharray="1.800 1.810" />
    </>
  ),
};

const tasks = [
  { icon: "windows", width: "w-[25px]" },
  { icon: "taskView", width: "w-[27px]" },
  { icon: "edge", width: "w-[27px]" },
  { icon: "outlook", label: "Inbox - lars....", width: "w-[65px]" },
  { icon: "folder", label: "MC20Beta", width: "w-[65px]" },
  { icon: "word", label: "20.0 epost o...", width: "w-[62px]" },
  { icon: "excel", width: "w-[25px]" },
  { icon: "teamviewer", width: "w-[25px]" },
  { icon: "snip", width: "w-[25px]" },
  { icon: "skype", label: "Skype", width: "w-[62px]" },
  { icon: "gears", width: "w-[27px]" },
  { icon: "calculator", label: "Calculator", width: "w-[62px]" },
  { icon: "powerpoint", width: "w-[24px]" },
  { icon: "chrome", width: "w-[24px]" },
  { icon: "mc", width: "w-[26px]" },
  { icon: "shield", label: "FortiClient -...", width: "w-[65px]" },
  { icon: "teams", label: "Alex Shen | ...", width: "w-[65px]" },
  { icon: "settings", label: "Settings", width: "w-[65px]" },
  { icon: "mcRed", label: "MasterExplo...", width: "w-[63px]" },
  { icon: "brics", label: "BricsCAD Ul...", width: "w-[64px]", active: true },
];

function TaskIcon({ name }) {
  if (name === "mc") return <McLogo bg="#ec9a26" className="size-[13px]" />;
  if (name === "mcRed") return <McLogo bg="#cf2b30" className="size-[13px] shrink-0" />;
  if (name === "brics") return <BricsLogo className="size-[10px] shrink-0" />;
  return (
    <svg viewBox="0 0 12 12" className="size-3 shrink-0" aria-hidden="true">
      {taskIcons[name]}
    </svg>
  );
}

function Taskbar() {
  return (
    <div className="flex h-[21px] shrink-0 bg-[#202020] text-[7px] text-[#eee] [font-family:'Open_Sans',sans-serif]">
      {tasks.map(({ icon, label, width, active }) => (
        <div key={icon} className={`flex shrink-0 ${width}`}>
          {label ? (
            <button
              className={`flex items-center gap-1 border-b border-[#6fb0e8] text-[6px] whitespace-nowrap ${
                active ? "w-[63px] bg-[#4d4d4d] pl-[5px]" : "w-[60px] pl-[2px]"
              }`}
            >
              <TaskIcon name={icon} />
              {label}
            </button>
          ) : (
            <button aria-label={icon} className="flex flex-1 items-center justify-center">
              <TaskIcon name={icon} />
            </button>
          )}
        </div>
      ))}
      <div className="ml-auto flex shrink-0 items-center">
        <svg viewBox="0 0 52 10" className="h-[10px] w-[52px]" fill="none" stroke="#ddd" aria-hidden="true">
          <path d="m3 6.500 3-3 3 3" />
          <path d="M16 3.500h7v4h-7zM23 5h1.500" fill="#ccc" />
          <path d="M31 8.500q0-5 5-5M33 8.500q0-3 3-3M35 8.500h1v-1" stroke="#999" />
          <path d="M42 4h1.500L45.500 2v6l-2-2H42zM47 3.500q1 1.500 0 3M49 2.500q1.500 2.500 0 5" strokeWidth=".8" />
        </svg>
        <span className="ml-[3px] w-[17px] text-[6px]">ENG</span>
        <span className="w-[34px] text-center text-[6px] leading-[9px] whitespace-nowrap">
          10:34
          <br />
          2021-01-21
        </span>
        <svg viewBox="0 0 10 10" className="ml-2 mr-[13px] size-[10px]" aria-hidden="true">
          <path d="M.5 1h9v6.500H6l-2 2v-2H.500z" fill="#ddd" />
          <path d="M2 3h6M2 5h5" stroke="#333" strokeWidth=".8" />
        </svg>
      </div>
    </div>
  );
}

export default function App() {
  return (
    <div className="flex h-screen flex-col overflow-hidden bg-white text-[#222] [font-family:Roboto,sans-serif]">
      <header className="flex h-3 shrink-0 items-center pl-[2px] text-[6px]">
        <BricsLogo className="size-[6px]" />
        <h1 className="ml-1 flex-1 text-[6px] [font-family:'Open_Sans',sans-serif]">
          BricsCAD Ultimate (NOT FOR RESALE License) - [=G1&amp;EFS1-106.DWG]
        </h1>
        <div className="flex gap-[18px] pr-[10px]">
          <button aria-label="Minimize">
            <svg viewBox="0 0 6 6" className="size-[6px]"><path d="M0 3.500h6" stroke="#222" /></svg>
          </button>
          <button aria-label="Restore">
            <svg viewBox="0 0 6 6" className="size-[6px]"><path d="M.5 2h3.500v3.500H.5zM2 2V.5h3.500V4H4" fill="none" stroke="#222" strokeWidth=".9" /></svg>
          </button>
          <button aria-label="Close">
            <svg viewBox="0 0 6 6" className="size-[6px]"><path d="m.5 .5 5 5M5.500 .5l-5 5" stroke="#222" strokeWidth=".9" /></svg>
          </button>
        </div>
      </header>

      <Ribbon />

      <div className="flex h-[9px] shrink-0 items-center text-[7px] leading-[9px]">
        <button className="flex h-full w-[68px] items-center justify-between border-r border-[#aaa] bg-[#f2f2f2] pl-1 pr-[5px] font-medium text-black">
          =G1&amp;EFS1-106*
          <svg viewBox="0 0 6 6" className="size-[5px]" aria-hidden="true">
            <path d="m.5 .5 5 5M5.500 .5l-5 5" stroke="#111" strokeWidth="1.400" />
          </svg>
        </button>
        <button aria-label="New tab" className="h-full w-[13px] border-r border-[#bbb] bg-[#f2f2f2]">+</button>
      </div>

      <main className="flex min-h-0 flex-1 border-t border-b border-t-[#999] border-b-[#ddd]">
        <Palette />
        <Canvas />
      </main>

      <Bottom />
      <Taskbar />
    </div>
  );
}
